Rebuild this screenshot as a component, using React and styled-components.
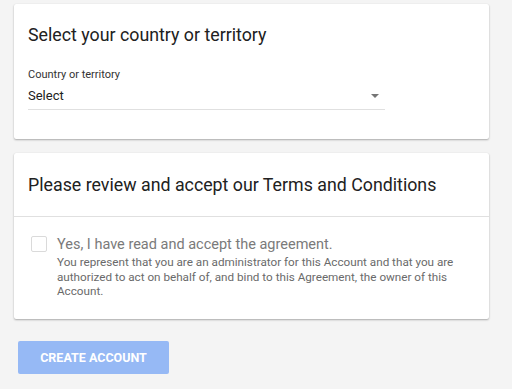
import React from "react"
import styled, { createGlobalStyle } from "styled-components"

const Global = createGlobalStyle`
  html, body {
    margin: 0;
    background: #f4f4f4;
    font-family: Roboto, "Noto Sans", Arial, sans-serif;
  }
`

const Page = styled.div`
  padding: 4px 23px 14px 14px;
  display: flex;
  flex-direction: column;
  gap: 14px;
`

const Card = styled.section`
  background: #ffffff;
  border-radius: 2px;
  box-shadow: 0 1px 2px rgba(0, 0, 0, 0.3), 0 0 1px rgba(0, 0, 0, 0.08);
`

const CardHead = styled.div`
  padding: ${(p) => (p.divided ? "21px 14px 20px" : "20px 14px 0")};
  border-bottom: ${(p) => (p.divided ? "1px solid #e0e0e0" : "none")};
`

const Title = styled.h2`
  margin: 0;
  font-size: 17.8px;
  font-weight: 400;
  color: #212121;
  line-height: 22px;
`

const Field = styled.div`
  padding: 22px 14px 29px;
  width: 357px;
`

const Label = styled.div`
  margin-bottom: 4px;
  font-size: 11px;
  color: #333;
  line-height: 13px;
`

const SelectRow = styled.div`
  display: flex;
  align-items: center;
  justify-content: space-between;
  padding: 2px 0 5px;
  border-bottom: 1px solid #e0e0e0;
  font-size: 13px;
  color: #212121;
  line-height: 17px;
`

const Caret = styled.span`
  width: 0;
  height: 0;
  margin-right: 6px;
  border-left: 4px solid transparent;
  border-right: 4px solid transparent;
  border-top: 4px solid #757575;
`

const Agree = styled.div`
  display: flex;
  gap: 10px;
  padding: 19px 14px 20px 17px;
`

const Box = styled.span`
  flex: none;
  width: 14px;
  height: 14px;
  border: 1px solid #dadada;
  border-radius: 2px;
`

const AgreeTitle = styled.div`
  font-size: 14.5px;
  color: #7a7a7a;
  line-height: 18px;
`

const AgreeText = styled.p`
  margin: 1px 0 0;
  font-size: 11.7px;
  line-height: 14.5px;
  color: #6a6a6a;
`

const Button = styled.button`
  align-self: flex-start;
  margin: 8px 0 0 4px;
  width: 151px;
  height: 33px;
  border: none;
  border-radius: 2px;
  background: #96b9f5;
  color: #ffffff;
  font-family: Roboto, Arial, sans-serif;
  font-size: 12.5px;
  font-weight: 700;
  text-transform: uppercase;
`

export default function App() {
  return (
    <>
      <Global />
      <Page>
        <Card>
          <CardHead>
            <Title>Select your country or territory</Title>
          </CardHead>
          <Field>
            <Label>Country or territory</Label>
            <SelectRow>
              <span>Select</span>
              <Caret />
            </SelectRow>
          </Field>
        </Card>
        <Card>
          <CardHead divided>
            <Title>Please review and accept our Terms and Conditions</Title>
          </CardHead>
          <Agree>
            <Box />
            <div>
              <AgreeTitle>Yes, I have read and accept the agreement.</AgreeTitle>
              <AgreeText>
                You represent that you are an administrator for this Account and that you are
                authorized to act on behalf of, and bind to this Agreement, the owner of this
                Account.
              </AgreeText>
            </div>
          </Agree>
        </Card>
        <Button>Create account</Button>
      </Page>
    </>
  )
}
